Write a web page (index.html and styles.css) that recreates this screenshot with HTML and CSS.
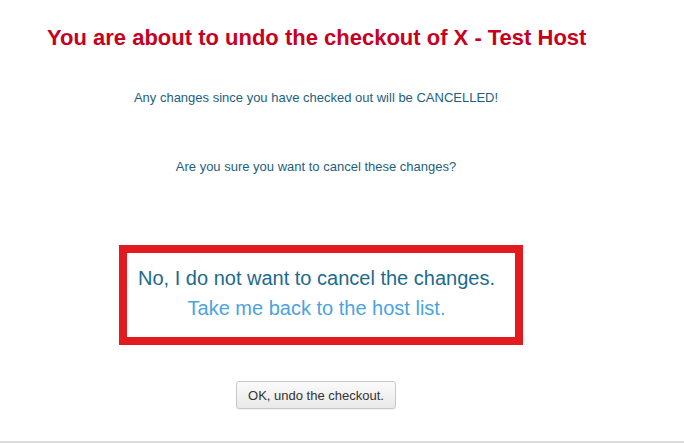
FILE: index.html
```html
<html>
  <head>
    <title>Undo checkout</title>
    <link rel="stylesheet" href="styles.css">
  </head>
  <body>
    <div class="page">
      <h1 class="title">You are about to undo the checkout of X - Test Host</h1>

      <p class="notice">Any changes since you have checked out will be CANCELLED!</p>

      <p class="notice question">Are you sure you want to cancel these changes?</p>

      <div class="back-box">
        <div class="back-line">No, I do not want to cancel the changes.</div>
        <a class="back-link" href="#">Take me back to the host list.</a>
      </div>

      <form class="confirm" action="">
        <button type="button" class="btn">OK, undo the checkout.</button>
      </form>
    </div>
    <div class="footer-rule"></div>
  </body>
</html>
```

FILE: styles.css
```css
body {
  margin: 0px;
  font-family: "Liberation Sans", Arial, sans-serif;
  background: #ffffff;
}

.page {
  width: 616px;
  margin-left: 8px;
  height: 441px;
  overflow: hidden;
}

.title {
  margin: 0px;
  padding: 25px 0px 0px 39px;
  font-size: 22px;
  line-height: 26px;
  font-weight: bold;
  color: #c8001e;
}

.notice {
  margin: 0px;
  padding-top: 39px;
  text-align: center;
  font-size: 13px;
  line-height: 16px;
  color: #1d5f7f;
}

.question {
  padding-top: 53px;
}

.back-box {
  width: 379px;
  margin: 70px auto 0px auto;
  padding: 10px 9px 14px 0px;
  border: 8px solid #e31b1e;
  text-align: center;
  position: relative;
  left: 5px;
}

.back-line {
  font-size: 20px;
  line-height: 30px;
  color: #1d6a8c;
}

.back-link {
  display: block;
  font-size: 20px;
  line-height: 30px;
  color: #4ba3de;
  text-decoration: none;
}

.confirm {
  margin: 36px 0px 0px 0px;
  text-align: center;
}

.btn {
  font-family: "Liberation Sans", Arial, sans-serif;
  font-size: 13px;
  color: #333333;
  width: 160px;
  height: 28px;
  padding: 0px;
  border: 1px solid #c8c8c8;
  border-radius: 3px;
  background: linear-gradient(#fafafa, #e9e9e9);
  box-shadow: 0px 1px 1px rgba(0, 0, 0, 0.05);
}

.footer-rule {
  height: 0px;
  border-top: 2px solid #dcdcdc;
}
```
